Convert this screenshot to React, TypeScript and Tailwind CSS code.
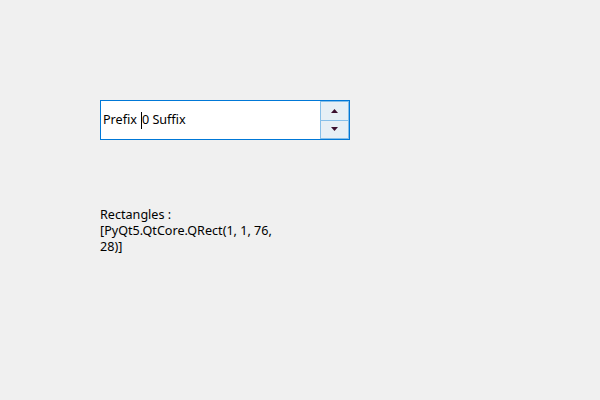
export default function App() {
  return (
    <div className="relative h-[400px] w-[600px] bg-[#f0f0f0] text-[12.6px] text-black [font-family:'Noto_Sans',sans-serif]">
      <div className="absolute left-[100px] top-[100px] flex h-[40px] w-[250px] border border-[#0078d7] bg-white">
        <div className="flex flex-1 items-center pl-[2px]">
          <span>Prefix</span>
          <span className="ml-[4px] h-[17px] w-px bg-black" />
          <span>0 Suffix</span>
        </div>
        <div className="flex w-[29px] flex-col">
          <button className="flex flex-1 items-center justify-center border border-[#86bfe9] bg-[#e6eff5]">
            <svg width="7" height="4" viewBox="0 0 7 4"><path d="M3.5 0L7 4H0z" fill="#3a0f2e" /></svg>
          </button>
          <button className="flex flex-1 items-center justify-center border border-t-0 border-[#86bfe9] bg-[#e6eff5]">
            <svg width="7" height="4" viewBox="0 0 7 4"><path d="M0 0h7L3.5 4z" fill="#3a0f2e" /></svg>
          </button>
        </div>
      </div>
      <div className="absolute left-[100px] top-[207px] w-[200px] leading-[16px]">
        <div>Rectangles :</div>
        <div>[PyQt5.QtCore.QRect(1, 1, 76,</div>
        <div>28)]</div>
      </div>
    </div>
  );
}
